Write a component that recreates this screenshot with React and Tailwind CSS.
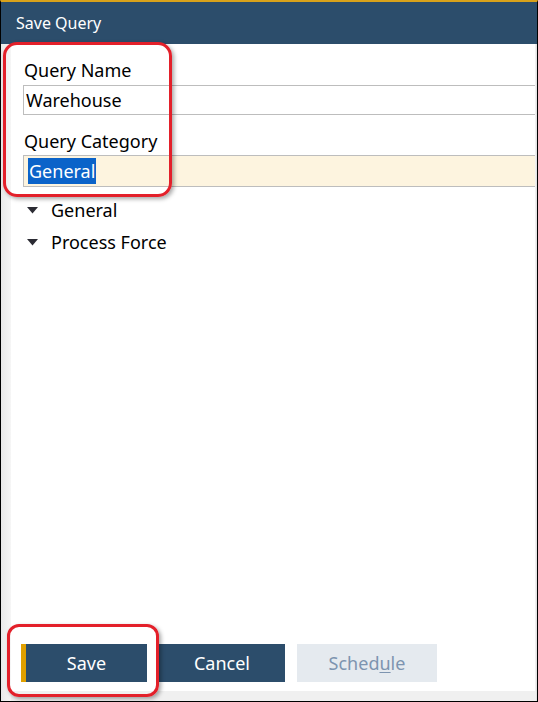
import React from "react";

const font = { fontFamily: '"Noto Sans", "Open Sans", sans-serif' };

function Caret() {
  return (
    <svg width="11" height="7" viewBox="0 0 11 7" className="shrink-0">
      <path d="M0 0 H11 L5.5 6.5 Z" fill="#2b2b33" />
    </svg>
  );
}

export default function App() {
  return (
    <div
      className="relative w-[538px] h-[702px] bg-white border border-black border-t-2 border-t-[#d9a21b] flex flex-col overflow-hidden"
      style={font}
    >
      {/* title bar */}
      <div className="h-[42px] bg-[#2c4d6b] flex items-center pl-[15px] text-white text-[16px]">
        Save Query
      </div>

      <div className="flex-1 flex">
        <div className="w-[10px] bg-gradient-to-r from-[#e9e9e9] to-[#f6f6f6]" />
        <div className="flex-1 flex flex-col">
          <div className="pl-[12px] pt-[13px]">
            <div className="text-[18px] leading-[26px] text-black pl-[1px]">Query Name</div>
            <div className="mt-[2px] h-[30px] border border-r-0 border-[#bdbdbd] flex items-center pl-[2px] text-[18px] text-black">
              Warehouse
            </div>
            <div className="mt-[13px] text-[18px] leading-[26px] text-black pl-[1px]">Query Category</div>
            <div className="mt-[1px] h-[32px] border border-r-0 border-[#bdbdbd] bg-[#fdf4df] flex items-center pl-[4px] text-[18px]">
              <span className="bg-[#0b63c9] text-white leading-[26px] px-[1px]">General</span>
            </div>
          </div>

          <div className="pl-[16px] pt-[10px] flex flex-col gap-[6px] text-[18px] text-black">
            <div className="flex items-center gap-[13px] h-[26px]">
              <Caret />
              <span>General</span>
            </div>
            <div className="flex items-center gap-[13px] h-[26px]">
              <Caret />
              <span>Process Force</span>
            </div>
          </div>

          <div className="flex-1" />

          <div className="flex gap-[12px] pl-[10px] pb-[9px] text-[18px]">
            <button className="w-[126px] h-[38px] bg-[#2c4d6b] text-white border-l-[5px] border-[#e0a000]">
              Save
            </button>
            <button className="w-[126px] h-[38px] bg-[#2c4d6b] text-white">Cancel</button>
            <button className="w-[140px] h-[38px] bg-[#e5eaef] text-[#7d94b0]">
              Sched<span className="underline underline-offset-2">u</span>le
            </button>
          </div>
          <div className="h-[10px] bg-[#f0f0f0]" />
        </div>
        <div className="w-[2px] bg-gradient-to-r from-[#f5f5f5] to-[#dedede]" />
      </div>

      {/* annotation highlights */}
      <div className="absolute left-[2px] top-[40px] w-[169px] h-[155px] border-[3px] border-[#e3202a] rounded-[14px] shadow-[2px_2px_4px_rgba(0,0,0,0.35)]" />
      <div className="absolute left-[6px] top-[622px] w-[152px] h-[73px] border-[3px] border-[#e3202a] rounded-[12px] shadow-[2px_2px_4px_rgba(0,0,0,0.35)]" />
    </div>
  );
}
